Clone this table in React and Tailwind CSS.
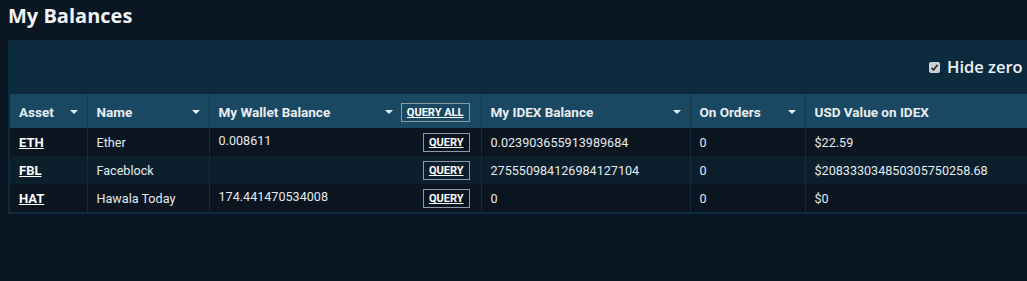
import React from "react";

const Caret = () => (
  <svg width="8" height="4" viewBox="0 0 8 4" className="shrink-0">
    <path d="M0 0 L8 0 L4 4 Z" fill="#e6edf2" />
  </svg>
);

const QueryBtn = ({ children }) => (
  <span className="inline-flex items-center justify-center h-[19px] px-[5px] border border-[#8c9ba6] text-[11px] font-bold underline text-white leading-none">
    {children}
  </span>
);

const rows = [
  { sym: "ETH", name: "Ether", wallet: "0.008611", idex: "0.023903655913989684", orders: "0", usd: "$22.59" },
  { sym: "FBL", name: "Faceblock", wallet: "", idex: "275550984126984127104", orders: "0", usd: "$208333034850305750258.68" },
  { sym: "HAT", name: "Hawala Today", wallet: "174.441470534008", idex: "0", orders: "0", usd: "$0" },
];

export default function App() {
  return (
    <div className="w-[1027px] h-[281px] overflow-hidden bg-[#0a1622] text-white" style={{ fontFamily: "Roboto, 'Liberation Sans', sans-serif" }}>
      <div className="pl-[8px] pt-[3px] h-[40px]">
        <h1 className="text-[20px] font-bold leading-[26px] text-[#f0f4f7]" style={{ fontFamily: "'Open Sans', sans-serif" }}>My Balances</h1>
      </div>
      <div className="ml-[8px] w-[1100px] bg-[#0c2a3e] rounded-tl-[3px] px-[2px] pb-[2px]">
        <div className="h-[54px] flex items-center pl-[919px]">
          <span className="w-[11px] h-[11px] bg-[#cfd2d4] rounded-[2px] flex items-center justify-center">
            <svg width="9" height="9" viewBox="0 0 9 9"><path d="M1.5 4.8 L3.6 6.8 L7.6 1.8" stroke="#333" strokeWidth="1.8" fill="none" /></svg>
          </span>
          <span className="ml-[7px] text-[16.5px] font-semibold text-[#eef2f5]" style={{ fontFamily: "'Open Sans', sans-serif" }}>Hide zero</span>
        </div>
        <table className="border-collapse text-[12.6px] table-fixed w-[1098px]">
          <colgroup>
            <col className="w-[77px]" />
            <col className="w-[122px]" />
            <col className="w-[272px]" />
            <col className="w-[209px]" />
            <col className="w-[115px]" />
            <col />
          </colgroup>
          <thead>
            <tr className="bg-[#1a4862] h-[34px] text-[13.5px] text-[#e8eef2]">
              <th className="px-[9px] pt-[2px] text-left font-bold border-r border-[#143a50]">
                <div className="flex items-center justify-between">Asset<Caret /></div>
              </th>
              <th className="px-[9px] pt-[2px] text-left font-bold border-r border-[#143a50]">
                <div className="flex items-center justify-between">Name<Caret /></div>
              </th>
              <th className="pl-[9px] pr-[11px] pt-[1px] text-left font-bold border-r border-[#143a50]">
                <div className="flex items-center">
                  <span className="flex-1 pt-[1px]">My Wallet Balance</span>
                  <Caret />
                  <span className="ml-[8px]"><QueryBtn>QUERY ALL</QueryBtn></span>
                </div>
              </th>
              <th className="px-[9px] pt-[2px] text-left font-bold border-r border-[#143a50]">
                <div className="flex items-center justify-between">My IDEX Balance<Caret /></div>
              </th>
              <th className="px-[9px] pt-[2px] text-left font-bold border-r border-[#143a50]">
                <div className="flex items-center justify-between">On Orders<Caret /></div>
              </th>
              <th className="px-[9px] pt-[2px] text-left font-bold">USD Value on IDEX</th>
            </tr>
          </thead>
          <tbody>
            {rows.map((r, i) => (
              <tr key={r.sym} className={`h-[28px] ${i % 2 === 1 ? "bg-[#0b1f2d]" : "bg-[#0a1520]"} text-[#e4eaee]`}>
                <td className="px-[9px] pt-[2px] border-r border-[#132b3b] font-bold underline text-white text-[13px]">{r.sym}</td>
                <td className="px-[9px] pt-[2px] border-r border-[#132b3b]">{r.name}</td>
                <td className="pl-[9px] pr-[11px] border-r border-[#132b3b]">
                  <div className="flex items-start justify-between h-[28px]">
                    <span className="pt-[4px]">{r.wallet}</span>
                    <span className="pt-[5px]"><QueryBtn>QUERY</QueryBtn></span>
                  </div>
                </td>
                <td className="px-[9px] pt-[2px] border-r border-[#132b3b]">{r.idex}</td>
                <td className="px-[9px] pt-[2px] border-r border-[#132b3b]">{r.orders}</td>
                <td className="px-[9px] pt-[2px]">{r.usd}</td>
              </tr>
            ))}
          </tbody>
        </table>
      </div>
    </div>
  );
}
